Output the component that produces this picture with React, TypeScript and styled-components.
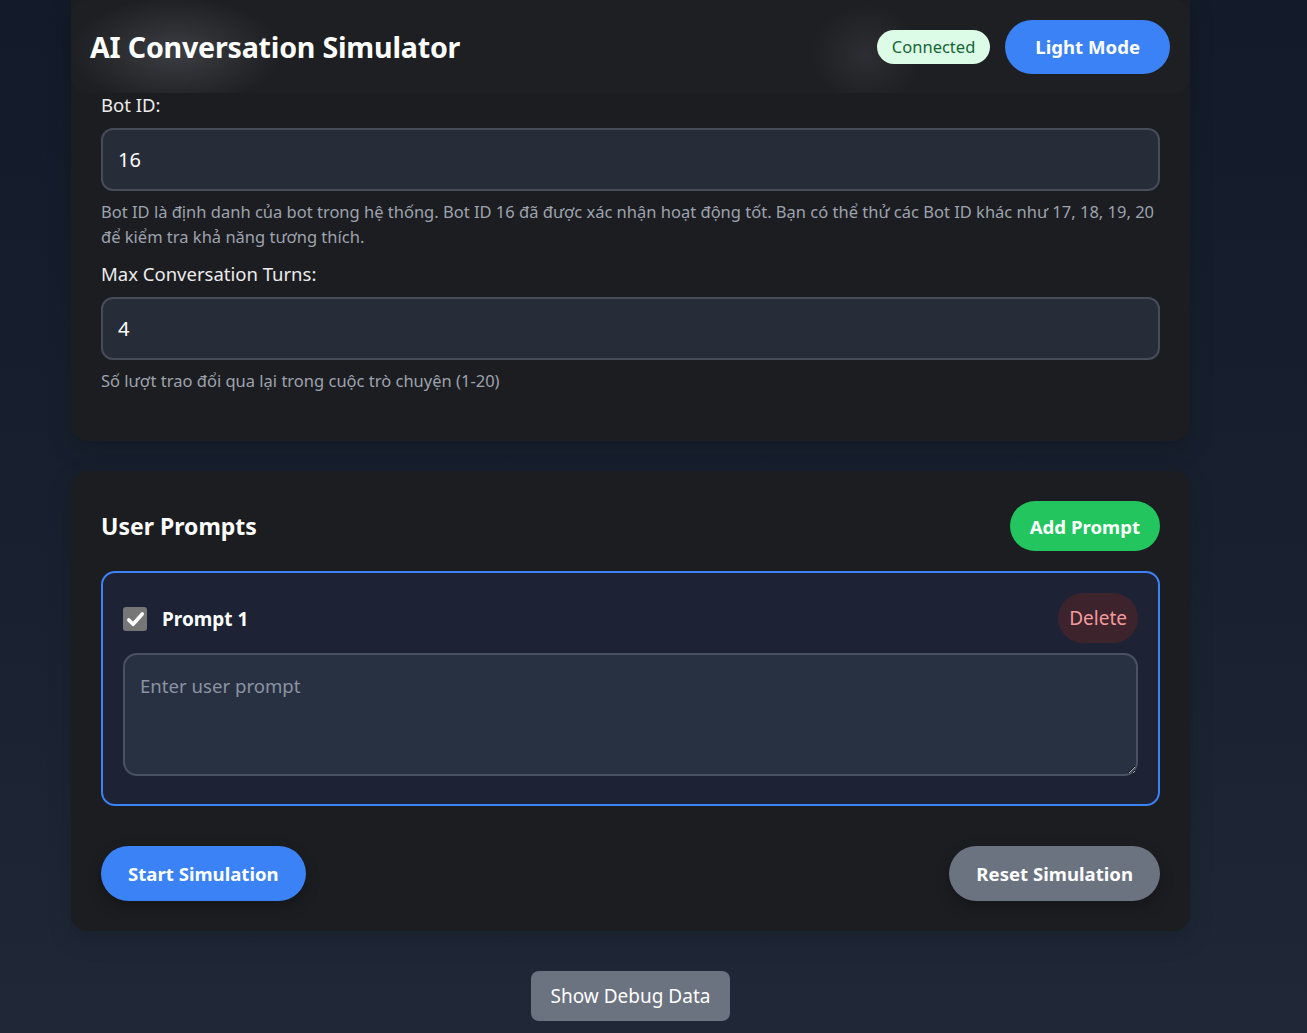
import React from "react";
import styled, { createGlobalStyle } from "styled-components";

const Global = createGlobalStyle`
  html, body { margin: 0; padding: 0; }
  body {
    min-height: 1033px;
    background: linear-gradient(180deg, #131a29 0%, #18202f 50%, #202838 100%);
    font-family: "Noto Sans", "Open Sans", sans-serif;
    color: #f3f4f6;
    overflow: hidden;
  }
  * { box-sizing: border-box; }
`;

const Page = styled.div`
  padding-left: 71px;
`;

const Container = styled.div`
  width: 1119px;
  display: flex;
  flex-direction: column;
  align-items: stretch;
`;

const Card = styled.section<{ $top?: boolean }>`
  background: #1c1d20;
  border-radius: ${(p) => (p.$top ? "0 0 16px 16px" : "16px")};
  padding: ${(p) => (p.$top ? "0 30px 48px" : "30px 30px 30px")};
  margin-top: ${(p) => (p.$top ? "0" : "30px")};
  box-shadow: 0 8px 24px rgba(0, 0, 0, 0.18);
`;

const Header = styled.header`
  height: 93px;
  margin: 0 -30px;
  padding: 0 20px 0 19px;
  display: flex;
  align-items: center;
  justify-content: space-between;
  border-radius: 16px;
  background:
    radial-gradient(ellipse 105px 55px at 105px 52px, rgba(62, 63, 68, 0.95), rgba(60, 61, 66, 0) 100%),
    radial-gradient(ellipse 55px 50px at 795px 55px, rgba(52, 53, 58, 0.7), rgba(52, 53, 58, 0) 100%),
    #1e1f22;
`;

const Title = styled.h1`
  margin: 0;
  font-size: 28.6px;
  font-weight: 700;
  color: #ffffff;
  letter-spacing: -0.2px;
`;

const HeaderActions = styled.div`
  display: flex;
  align-items: center;
  gap: 15px;
`;

const Badge = styled.span`
  background: #dcfce7;
  color: #166534;
  font-size: 16.5px;
  height: 34px;
  padding: 0 15px;
  display: inline-flex;
  align-items: center;
  border-radius: 17px;
`;

const PillButton = styled.button<{ $color: string; $h?: number; $px?: number; $shadow?: boolean }>`
  font-family: inherit;
  background: ${(p) => p.$color};
  color: #ffffff;
  border: none;
  border-radius: 999px;
  height: ${(p) => p.$h ?? 55}px;
  padding: 0 ${(p) => p.$px ?? 30}px;
  font-size: 18.6px;
  font-weight: 700;
  box-shadow: ${(p) => (p.$shadow ? "0 6px 14px rgba(0, 0, 0, 0.25)" : "none")};
  cursor: pointer;
`;

const Field = styled.div<{ $mt?: number }>`
  display: flex;
  flex-direction: column;
  margin-top: ${(p) => p.$mt ?? 0}px;
`;

const Label = styled.label`
  font-size: 18.5px;
  line-height: 23px;
  color: #ececec;
  margin-bottom: 12px;
`;

const Input = styled.input`
  font-family: inherit;
  height: 63px;
  background: #272d38;
  border: 2px solid #464c58;
  border-radius: 12px;
  padding: 0 15px;
  color: #ffffff;
  font-size: 20px;
  outline: none;
`;

const Help = styled.p`
  margin: 8px 0 0;
  font-size: 16.5px;
  line-height: 25px;
  color: #9ca3af;
`;

const SectionRow = styled.div`
  display: flex;
  align-items: center;
  justify-content: space-between;
`;

const SectionTitle = styled.h2`
  margin: 0;
  font-size: 23px;
  font-weight: 700;
  color: #ffffff;
`;

const PromptCard = styled.div`
  margin-top: 20px;
  border: 2px solid #3b82f6;
  border-radius: 14px;
  background: #1d2235;
  padding: 20px 20px 28px;
`;

const PromptHead = styled.div`
  display: flex;
  align-items: center;
  justify-content: space-between;
`;

const CheckLabel = styled.div`
  display: flex;
  align-items: center;
  gap: 15px;
  font-size: 19px;
  font-weight: 700;
  color: #ffffff;
  padding-top: 2px;
`;

const CheckBox = styled.span`
  width: 24px;
  height: 24px;
  border-radius: 3px;
  background: #767676;
  display: inline-flex;
  align-items: center;
  justify-content: center;
`;

const DeleteButton = styled.button`
  font-family: inherit;
  height: 50px;
  padding: 0 11px;
  border: none;
  border-radius: 25px;
  background: #3d232c;
  color: #f39a9c;
  font-size: 19px;
`;

const TextArea = styled.textarea`
  display: block;
  width: 100%;
  margin-top: 10px;
  height: 123px;
  background: #283142;
  border: 2px solid #4a5160;
  border-radius: 14px;
  padding: 18px 15px;
  color: #ffffff;
  font-family: inherit;
  font-size: 18.6px;
  outline: none;
  &::placeholder { color: #8b93a1; }
`;

const ActionRow = styled.div`
  margin-top: 40px;
  display: flex;
  justify-content: space-between;
  align-items: center;
`;

const DebugWrap = styled.div`
  margin-top: 40px;
  display: flex;
  justify-content: center;
`;

const DebugButton = styled.button`
  font-family: inherit;
  height: 50px;
  padding: 0 20px;
  border: none;
  border-radius: 8px;
  background: #6b7280;
  color: #ffffff;
  font-size: 19px;
`;

export default function App() {
  return (
    <>
      <Global />
      <Page>
        <Container>
          <Card $top>
            <Header>
              <Title>AI Conversation Simulator</Title>
              <HeaderActions>
                <Badge>Connected</Badge>
                <PillButton $color="#3b82f6" $h={54} $px={30}>
                  Light Mode
                </PillButton>
              </HeaderActions>
            </Header>
            <Field>
              <Label>Bot ID:</Label>
              <Input defaultValue="16" />
              <Help>
                Bot ID là định danh của bot trong hệ thống. Bot ID 16 đã được xác nhận hoạt động tốt. Bạn có thể thử các Bot ID khác như 17, 18, 19, 20 để kiểm tra khả năng tương thích.
              </Help>
            </Field>
            <Field $mt={13}>
              <Label>Max Conversation Turns:</Label>
              <Input defaultValue="4" />
              <Help>Số lượt trao đổi qua lại trong cuộc trò chuyện (1-20)</Help>
            </Field>
          </Card>

          <Card>
            <SectionRow>
              <SectionTitle>User Prompts</SectionTitle>
              <PillButton $color="#22c55e" $h={50} $px={20}>
                Add Prompt
              </PillButton>
            </SectionRow>
            <PromptCard>
              <PromptHead>
                <CheckLabel>
                  <CheckBox>
                    <svg width="19" height="19" viewBox="0 0 24 24">
                      <path d="M3.5 12.5 L9 18 L20.5 5" fill="none" stroke="#fff" strokeWidth="4.5" strokeLinecap="round" strokeLinejoin="round" />
                    </svg>
                  </CheckBox>
                  Prompt 1
                </CheckLabel>
                <DeleteButton>Delete</DeleteButton>
              </PromptHead>
              <TextArea placeholder="Enter user prompt" />
            </PromptCard>
            <ActionRow>
              <PillButton $color="#3b82f6" $px={27} $shadow>Start Simulation</PillButton>
              <PillButton $color="#6b7280" $px={27} $shadow>Reset Simulation</PillButton>
            </ActionRow>
          </Card>

          <DebugWrap>
            <DebugButton>Show Debug Data</DebugButton>
          </DebugWrap>
        </Container>
      </Page>
    </>
  );
}
